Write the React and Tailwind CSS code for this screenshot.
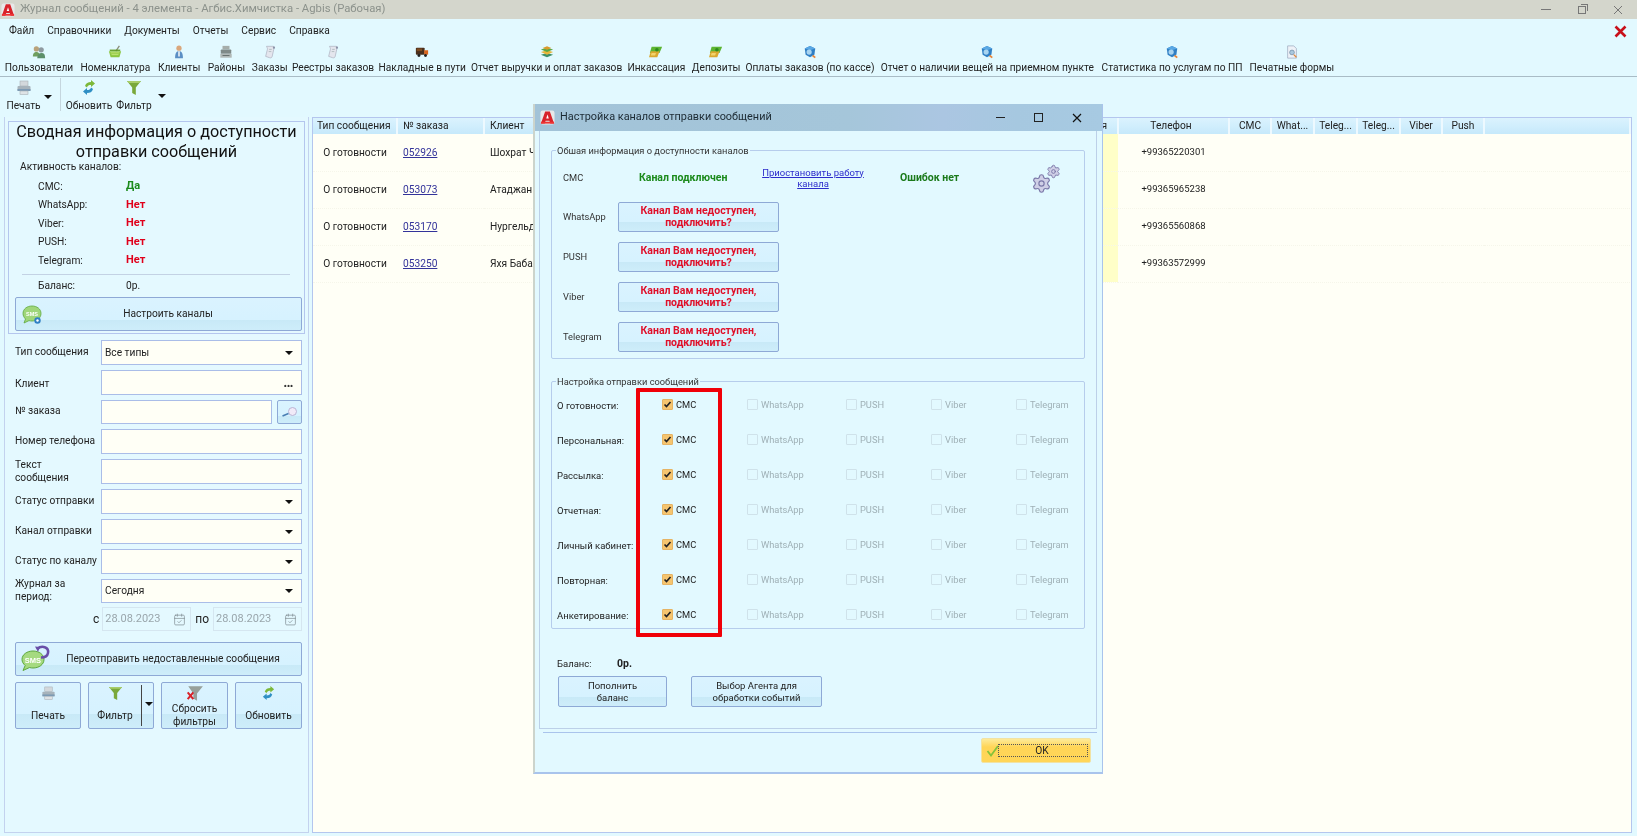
import React from "react";
import { Settings, CalendarCheck } from "lucide-react";

const btn = "bg-[linear-gradient(#daf3ff_0%,#d6f2ff_68%,#c8e9f7_68%,#ceedfa_100%)] border border-[#8ea9d6] rounded-[2px]";

const Logo = ({ s = 15 }) => (
  <svg width={s} height={s} viewBox="0 0 16 16" className="shrink-0">
    <rect x="0.5" y="0.5" width="15" height="15" rx="2.5" fill="#e8e8e8" />
    <path d="M5.5 1.5h5L15 14.5H11L10 11.5H6L5 14.5H1Z" fill="#d8232a" />
    <path d="M8 4.8L9.4 9H6.6Z" fill="#fff" />
    <path d="M1 12.5h14v2H1Z" fill="#e33" />
  </svg>
);

const Users = () => (
  <svg width="16" height="16" viewBox="0 0 16 16"><circle cx="5" cy="4.5" r="3" fill="#b9a27a" /><circle cx="10.5" cy="5.5" r="3" fill="#8f9aa0" /><path d="M1 13c0-4 2-5 4-5s4 1 4 5Z" fill="#6f9f5f" /><path d="M6 15c0-4 2-6 5-6s4 2 4 6Z" fill="#5c8f6a" /></svg>
);
const Basket = () => (
  <svg width="16" height="16" viewBox="0 0 16 16"><path d="M1 7h14l-2 7H3Z" fill="#8cc63f" /><path d="M3 9h10M4 11h8" stroke="#c9e87f" /><path d="M9 7l4-6" stroke="#8a8f7a" strokeWidth="1.5" /><path d="M2 6h12" stroke="#5f9a20" strokeWidth="1.5" /></svg>
);
const Client = () => (
  <svg width="16" height="16" viewBox="0 0 16 16"><circle cx="8" cy="3.7" r="3" fill="#d9a77c" /><path d="M3.5 15c0-6 1.500-8 4.500-8s4.500 2 4.500 8Z" fill="#5b8fc4" /><path d="M7 7h2v6H7Z" fill="#dfe9f2" /></svg>
);
const Stack = () => (
  <svg width="16" height="16" viewBox="0 0 16 16"><rect x="4" y="1" width="8" height="4" fill="#a5adaa" /><rect x="2" y="5" width="12" height="5" rx="1" fill="#7f8a88" /><rect x="1.500" y="10" width="13" height="4.500" fill="#b0b8b6" /><path d="M4 12h8" stroke="#5d6866" /></svg>
);
const Scroll = () => (
  <svg width="16" height="16" viewBox="0 0 16 16"><path d="M4 1.500h7.500c1.500 0 2 1 1 2.500l-2 9c-.3 1.500-1.500 2-3 1.500L3 13l2-8C5.300 3.500 4.500 3 4 1.500Z" fill="#e4e6ee" stroke="#a4a8b8" strokeWidth=".7" /><path d="M7 5h3M6.500 7.500h3" stroke="#9aa" strokeWidth=".7" /><circle cx="12.500" cy="3" r="1.300" fill="#8a93a8" /></svg>
);
const Truck = () => (
  <svg width="16" height="16" viewBox="0 0 16 16"><rect x="1" y="3" width="10" height="8" rx="1" fill="#4a2f1c" /><rect x="2" y="4" width="6" height="3" fill="#7c4a20" /><rect x="10.500" y="6" width="4.500" height="5" fill="#d9641c" /><circle cx="4.500" cy="12" r="1.700" fill="#222" /><circle cx="12" cy="12" r="1.700" fill="#222" /></svg>
);
const Books = () => (
  <svg width="16" height="16" viewBox="0 0 16 16"><path d="M1 11l7-2 7 2-7 3Z" fill="#3c8f6a" /><path d="M1 8l7-2 7 2-7 3Z" fill="#e8b53a" /><path d="M1 5l7-2 7 2-7 3Z" fill="#5aa845" /><path d="M3 3.500l5-2 5 2-5 2Z" fill="#d99a2b" /></svg>
);
const Money = () => (
  <svg width="16" height="16" viewBox="0 0 16 16"><path d="M3 2h12l-3 7H1Z" fill="#5cb531" /><path d="M2 7h10l-2.500 7H0Z" fill="#d9a82e" /><circle cx="9" cy="5.500" r="2" fill="#2f8a1c" /><path d="M3 9h5l-1 3H2Z" fill="#f2d36b" /></svg>
);
const Globe = () => (
  <svg width="16" height="16" viewBox="0 0 16 16"><path d="M2 4l6-3 6 3-1 7-5 3-5-3Z" fill="#2f7fc4" /><path d="M2 4l6 2 6-2-6-3Z" fill="#5aa8e4" /><circle cx="7" cy="8" r="3" fill="#a8d4f0" /><path d="M11 12l3 2.500" stroke="#e8863a" strokeWidth="2" /></svg>
);
const Doc = () => (
  <svg width="16" height="16" viewBox="0 0 16 16"><path d="M3 1h7l3 3v11H3Z" fill="#eef2f8" stroke="#9aa6bc" strokeWidth=".8" /><circle cx="8" cy="8.500" r="2.700" fill="#a9c8de" stroke="#6f8aa0" strokeWidth=".8" /><path d="M10 11l3 3" stroke="#e08a3a" strokeWidth="1.500" /></svg>
);
const Printer = ({ s = 16 }) => (
  <svg width={s} height={s} viewBox="0 0 16 16"><rect x="4" y="1" width="8" height="5" fill="#d3d8dc" stroke="#a9b1b6" strokeWidth=".6" /><rect x="1.500" y="6" width="13" height="5" rx="1" fill="#a7b3bb" /><rect x="1.500" y="9" width="13" height="2" fill="#7c9ab4" /><rect x="4" y="11" width="8" height="3.500" fill="#dfe3e6" stroke="#a9b1b6" strokeWidth=".6" /></svg>
);
const Refresh = ({ s = 16 }) => (
  <svg width={s} height={s} viewBox="0 0 16 16"><path d="M4 6c1-3 3-4 6-4V0l4 3.500L10 7V5C8 5 6.500 5.500 6 7.500Z" fill="#7cb83a" /><path d="M12 10c-1 3-3 4-6 4v2l-4-3.500L6 9v2c2 0 3.500-.5 4-2.500Z" transform="translate(0 -1)" fill="#2f8fc4" /></svg>
);
const Funnel = ({ s = 16 }) => (
  <svg width={s} height={s} viewBox="0 0 16 16"><path d="M1 1h14L9.800 7.500V15L6.200 13V7.500Z" fill="#79a83a" /><path d="M1 1h14l-1.500 2h-11Z" fill="#a8cc6a" /></svg>
);
const FunnelX = () => (
  <svg width="18" height="18" viewBox="0 0 16 16"><path d="M2 1h13L9.800 7.500V14L6.500 12V7.500Z" fill="#97a09a" /><path d="M1.500 6.500l5 6M6.500 6.500l-5 6" stroke="#d8232a" strokeWidth="1.800" /></svg>
);
const Caret = ({ className = "" }) => (
  <span className={"block w-0 h-0 border-x-[4px] border-x-transparent border-t-[4px] border-t-[#111] " + className} />
);
const SmsGear = () => (
  <svg width="20" height="20" viewBox="0 0 20 20"><path d="M10 1c5 0 9 3 9 7.500S15 16 10 16c-1 0-2-.1-3-.4L2 18l1.500-4C2 12.500 1 10.500 1 8.500 1 4 5 1 10 1Z" fill="#9fd67a" stroke="#5ea83c" strokeWidth=".8" /><text x="10" y="10.500" textAnchor="middle" fontSize="5.500" fontWeight="700" fill="#fff" fontFamily="Liberation Sans">SMS</text><circle cx="15.500" cy="15.500" r="3.200" fill="#2f7fc4" /><circle cx="15.500" cy="15.500" r="1.200" fill="#fff" /></svg>
);
const SmsResend = () => (
  <svg width="30" height="30" viewBox="0 0 30 30"><path d="M12 7c6 0 11 3.500 11 8.500S18 24 12 24c-1.200 0-2.400-.2-3.500-.5L2 26.500l2.200-5C2.200 19.800 1 17.800 1 15.500 1 10.500 6 7 12 7Z" fill="#a5da80" stroke="#5ea83c" /><text x="12" y="18.500" textAnchor="middle" fontSize="7.500" fontWeight="700" fill="#fff" fontFamily="Liberation Sans">SMS</text><path d="M16 5c5-4 12-2 11 4-.5 3-3.500 4.500-7 4.500" fill="none" stroke="#6a4fa8" strokeWidth="2.500" /><path d="M14 2.500l5 .5-2 5Z" fill="#6a4fa8" /></svg>
);
const Lens = () => (
  <svg width="18" height="14" viewBox="0 0 18 14"><circle cx="11.500" cy="6.500" r="4" fill="#f1eaf8" stroke="#b9b4d4" /><path d="M1.500 11l6-2.500" stroke="#4a7fb4" strokeWidth="1.600" /></svg>
);

const tools = [
  ["Пользователи", Users, "w-[66px]"],
  ["Номенклатура", Basket, "w-[69px]"],
  ["Клиенты", Client, "w-[41px]"],
  ["Районы", Stack, "w-[36px]"],
  ["Заказы", Scroll, "w-[33px]"],
  ["Реестры заказов", Scroll, "w-[76px]"],
  ["Накладные в пути", Truck, "w-[85px]"],
  ["Отчет выручки и оплат заказов", Books, "w-[146px]"],
  ["Инкассация", Money, "w-[56px]"],
  ["Депозиты", Money, "w-[46px]"],
  ["Оплаты заказов (по кассе)", Globe, "w-[124px]"],
  ["Отчет о наличии вещей на приемном пункте", Globe, "w-[213px]"],
  ["Статистика по услугам по ПП", Globe, "w-[139px]"],
  ["Печатные формы", Doc, "w-[83px]"],
];

const Row = ({ label, h = "h-[25px]", lc = "pb-[2px]", children }) => (
  <div className={"flex items-center " + h}>
    <div className={"w-[86px] shrink-0 text-[10.200px] leading-[13px] text-[#222] whitespace-nowrap " + lc}>{label}</div>
    {children}
  </div>
);
const Field = ({ caret, dots, text, className = "flex-1" }) => (
  <div className={"h-full border border-[#aabde8] bg-[#fffff6] flex items-center justify-between pl-[3px] pr-[8px] " + className}>
    <span className="text-[10.200px] text-[#222]">{text}</span>
    {caret && <Caret />}
    {dots && <span className="text-[12px] font-black leading-none text-[#333] tracking-[-0.5px]">...</span>}
  </div>
);
const DateBox = () => (
  <div className="w-[89px] h-full border border-[#d5e6f0] flex items-center justify-between pl-[2px] pr-[4px]">
    <span className="text-[11px] text-[#9aa6ac]">28.08.2023</span>
    <CalendarCheck size={13} color="#7f8c92" strokeWidth={1.3} />
  </div>
);
const Channel = ({ name, value, ok }) => (
  <div className="flex items-center h-[18.500px] pl-[23px]">
    <span className="w-[88px] text-[10.200px] text-[#222]">{name}</span>
    <span className={"text-[11px] font-bold " + (ok ? "text-[#1b8a1b]" : "text-[#e0001b]")}>{value}</span>
  </div>
);
const ConnectRow = ({ name }) => (
  <div className="flex items-center h-[30px]">
    <span className="w-[55px] text-[9.300px] text-[#333]">{name}</span>
    <div className={btn + " w-[161px] h-full flex items-center justify-center text-center text-[10.500px] leading-[12px] font-bold text-[#e0102a]"}>
      Канал Вам недоступен,<br />подключить?
    </div>
  </div>
);
const Check = ({ checked, label, className }) => (
  <div className={"flex items-center gap-[3px] " + className}>
    {checked ? (
      <span className="w-[11px] h-[11px] rounded-[1px] bg-[#f6c56f] border border-[#e6b464] flex items-center justify-center">
        <svg width="9" height="9" viewBox="0 0 9 9"><path d="M1.500 4.500l2 2 4-4.500" fill="none" stroke="#222" strokeWidth="1.700" /></svg>
      </span>
    ) : (
      <span className="w-[11px] h-[11px] rounded-[1px] border border-[#cfe2ea]" />
    )}
    <span className={"text-[9.300px] " + (checked ? "text-[#222]" : "text-[#9fb0b6]")}>{label}</span>
  </div>
);
const SendRow = ({ label }) => (
  <div className="flex items-center h-[35px]">
    <span className="w-[105px] text-[9.500px] text-[#222] mt-[3px]">{label}</span>
    <Check checked label="СМС" className="w-[85px]" />
    <Check label="WhatsApp" className="w-[99px]" />
    <Check label="PUSH" className="w-[85px]" />
    <Check label="Viber" className="w-[85px]" />
    <Check label="Telegram" className="w-[60px]" />
  </div>
);
const Legend = ({ children }) => (
  <span className="absolute left-[4px] -top-[7px] bg-[#e2f9ff] px-[1px] text-[9.300px] leading-[13px] text-[#333]">{children}</span>
);

const heads = [
  ["Тип сообщения", "w-[84px] text-left pl-[4px]"],
  ["№ заказа", "w-[87px] text-left pl-[5px]"],
  ["Клиент", "w-[466px] text-left pl-[5px]"],
  ["", "w-[100px]"],
  ["Время", "w-[68px] text-right pr-[10px]"],
  ["Телефон", "w-[111px] text-center pr-[5px]"],
  ["СМС", "w-[42px] text-center"],
  ["What...", "w-[43px] text-center"],
  ["Teleg...", "w-[43px] text-center"],
  ["Teleg...", "w-[43px] text-center"],
  ["Viber", "w-[42px] text-center"],
  ["Push", "w-[42px] text-center"],
  ["", ""],
];
const rows = [
  ["052926", "Шохрат Ч", "+99365220301"],
  ["053073", "Атаджан", "+99365965238"],
  ["053170", "Нургельд", "+99365560868"],
  ["053250", "Яхя Бабаг", "+99363572999"],
];

export default function App() {
  return (
    <div className="relative w-[1637px] h-[836px] overflow-hidden bg-[#e2f9ff] font-['Roboto',sans-serif] text-[#222] blur-[0.35px]">
      {/* window title */}
      <div className="h-[19px] bg-[#d4d6cc] flex items-center pl-[1px] pr-[14px]">
        <Logo s={14} />
        <span className="ml-[5px] text-[11.300px] text-[#8c928c]">Журнал сообщений - 4 элемента - Агбис.Химчистка - Agbis (Рабочая)</span>
        <div className="ml-auto flex items-center gap-[27px] text-[#6a6a6a]">
          <span className="w-[10px] h-px bg-[#777]" />
          <span className="relative w-[8px] h-[8px] border border-[#777] mt-[1px]"><span className="absolute -top-[3px] -right-[3px] w-[7px] h-[7px] border-t border-r border-[#777]" /></span>
          <svg width="10" height="10" viewBox="0 0 10 10"><path d="M1 1l8 8M9 1l-8 8" stroke="#777" /></svg>
        </div>
      </div>

      {/* menu */}
      <div className="h-[23px] flex items-center pl-[9px] pr-[10px] pt-[1px] gap-[13px] text-[10.200px]">
        {["Файл", "Справочники", "Документы", "Отчеты", "Сервис", "Справка"].map((m) => <span key={m}>{m}</span>)}
        <svg className="ml-auto" width="13" height="13" viewBox="0 0 13 13"><path d="M1.500 1.500l10 10M11.500 1.500l-10 10" stroke="#c8101a" strokeWidth="2.600" /></svg>
      </div>

      {/* main toolbar */}
      <div className="h-[35px] border-b border-[#a9bcc6] flex gap-[8.800px] pl-[6px]">
        {tools.map(([label, Icon, w]) => (
          <div key={label} className={"flex flex-col items-center shrink-0 " + w}>
            <div className="h-[19px] flex items-center justify-center [&_svg]:w-[14px] [&_svg]:h-[14px]"><Icon /></div>
            <span className="text-[10.200px] leading-[14px] whitespace-nowrap">{label}</span>
          </div>
        ))}
      </div>

      {/* secondary toolbar */}
      <div className="h-[40px] flex items-start pl-[7px] pt-[1px]">
        <div className="flex flex-col items-center w-[33px]">
          <div className="h-[20px] flex items-center"><Printer /></div>
          <span className="text-[10.200px] leading-[14px] mt-[1px]">Печать</span>
        </div>
        <Caret className="ml-[4px] mt-[17px]" />
        <div className="ml-[8px] mr-[5px] w-px h-[33px] bg-[#c5d6de]" />
        <div className="flex flex-col items-center w-[46px]">
          <div className="h-[20px] flex items-center"><Refresh /></div>
          <span className="text-[10.200px] leading-[14px] mt-[1px]">Обновить</span>
        </div>
        <div className="flex flex-col items-center w-[36px] ml-[4px]">
          <div className="h-[20px] flex items-center"><Funnel /></div>
          <span className="text-[10.200px] leading-[14px] mt-[1px]">Фильтр</span>
        </div>
        <Caret className="ml-[6px] mt-[16px]" />
      </div>

      {/* content */}
      <div className="flex h-[716px] pl-[4px]">
        {/* left panel */}
        <div className="w-[305px] shrink-0 border border-[#c3d2ee] border-t-0 px-[3px] pt-[4px] bg-[#e4f9ff]">
          <div className="h-[213px] border border-[#b4c6ee] pl-[6px] pr-[2px]">
            <div className="-ml-[6px] -mr-[2px] text-center text-[16.200px] leading-[20px] text-[#111] whitespace-nowrap">Сводная информация о доступности<br />отправки сообщений</div>
            <div className="text-[10.200px] leading-[14px] mt-[-2px] pl-[5px]">Активность каналов:</div>
            <div className="mt-[3px]">
              <Channel name="СМС:" value="Да" ok />
              <Channel name="WhatsApp:" value="Нет" />
              <Channel name="Viber:" value="Нет" />
              <Channel name="PUSH:" value="Нет" />
              <Channel name="Telegram:" value="Нет" />
            </div>
            <div className="h-px bg-[#c3d2e4] mt-[4px] ml-[7px] mr-[12px]" />
            <div className="flex items-center h-[14px] mt-[4px] pl-[23px]">
              <span className="w-[88px] text-[10.200px]">Баланс:</span>
              <span className="text-[10.200px]">0р.</span>
            </div>
            <div className={btn + " relative h-[34px] mt-[4px] flex items-center justify-center text-[10.200px] pl-[19px]"}>
              <span className="absolute left-[6px] top-[7px]"><SmsGear /></span>
              Настроить каналы
            </div>
          </div>

          <div className="flex flex-col gap-[5px] mt-[6px] pl-[7px] pr-[3px]">
            <Row label="Тип сообщения"><Field caret text="Все типы" /></Row>
            <Row label="Клиент" lc="pt-[2px]"><Field dots /></Row>
            <Row label="№ заказа" h="h-[24px]" lc="pb-[4px]">
              <Field />
              <div className={btn + " w-[25px] h-full ml-[5px] flex items-center justify-center"}><Lens /></div>
            </Row>
            <Row label="Номер телефона"><Field /></Row>
            <Row label={<>Текст<br />сообщения</>}><Field /></Row>
            <Row label="Статус отправки"><Field caret /></Row>
            <Row label="Канал отправки"><Field caret /></Row>
            <Row label="Статус по каналу"><Field caret /></Row>
            <Row label={<>Журнал за<br />период:</>} h="h-[24px]"><Field caret text="Сегодня" /></Row>
            <div className="flex items-center justify-end h-[24px] -mt-[1px] text-[12px]">
              <span className="mr-[3px]">с</span>
              <DateBox />
              <span className="mx-[4px]">по</span>
              <DateBox />
            </div>
          </div>

          <div className="pl-[7px] pr-[3px] mt-[11px]">
            <div className={btn + " relative h-[34px] flex items-center justify-center text-[10.200px] pl-[29px]"}>
              <span className="absolute left-[5px] top-[1px]"><SmsResend /></span>
              Переотправить недоставленные сообщения
            </div>
            <div className="flex justify-between mt-[6px] h-[47px] text-[10.200px]">
              <div className={btn + " w-[66px] flex flex-col items-center pt-[3px]"}>
                <Printer s={15} />
                <span className="mt-[7px]">Печать</span>
              </div>
              <div className={btn + " w-[66px] flex"}>
                <div className="w-[52px] flex flex-col items-center pt-[3px]">
                  <Funnel s={15} />
                  <span className="mt-[7px]">Фильтр</span>
                </div>
                <div className="w-[1px] h-[41px] mt-[2px] bg-[#444]" />
                <Caret className="ml-[3px] mt-[19px] border-x-[3px] border-t-[3px]" />
              </div>
              <div className={btn + " w-[67px] flex flex-col items-center pt-[2px] leading-[13px] text-center"}>
                <FunnelX />
                <span className="mt-[-1px]">Сбросить<br />фильтры</span>
              </div>
              <div className={btn + " w-[67px] flex flex-col items-center pt-[3px]"}>
                <Refresh s={15} />
                <span className="mt-[7px]">Обновить</span>
              </div>
            </div>
          </div>
        </div>

        {/* table */}
        <div className="ml-[3px] w-[1320px] shrink-0 border border-[#b4c6ee] bg-[#fffff6]">
          <table className="w-full table-fixed border-collapse text-[10.200px]">
            <thead>
              <tr className="h-[16px] bg-[linear-gradient(#dbf3fe,#c6e9fb)]">
                {heads.map(([t, c], i) => (
                  <th key={i} className={"font-normal p-0 border-r-2 border-[#edf9ff] whitespace-nowrap leading-[16px] " + c}>{t}</th>
                ))}
              </tr>
            </thead>
            <tbody>
              {rows.map(([order, client, phone]) => (
                <tr key={order} className="h-[37px] border-b border-dotted border-[#f6f6ea]">
                  <td className="text-center p-0">О готовности</td>
                  <td className="pl-[6px] p-0"><span className="text-[#33339a] underline">{order}</span></td>
                  <td className="pl-[6px] p-0 whitespace-nowrap">{client}</td>
                  <td className="p-0" />
                  <td className="p-0 bg-[#ffffc8]" />
                  <td className="text-center p-0 text-[9.500px]">{phone}</td>
                  <td className="p-0" colSpan={7} />
                </tr>
              ))}
            </tbody>
          </table>
        </div>
      </div>

      {/* dialog */}
      <div className="absolute left-[533px] top-[104px] w-[570px] h-[670px] flex flex-col bg-[#e2f9ff] border-l-2 border-l-[#ccd4cc] border-r border-r-[#a9c4ec] border-b-2 border-b-[#a9c4ec]">
        <div className="h-[27px] shrink-0 flex items-center pl-[5px] bg-[linear-gradient(90deg,#a2c3d8_0%,#a5c6da_55%,#abc6e2_72%,#a6c8e0_85%,#a7cae2_100%)]">
          <Logo s={15} />
          <span className="ml-[5px] text-[10.900px] text-[#1c2a33]">Настройка каналов отправки сообщений</span>
          <div className="ml-auto flex items-center pr-[20px] gap-[29px]">
            <span className="w-[9px] h-px bg-[#222]" />
            <span className="w-[9px] h-[9px] border border-[#222]" />
            <svg width="10" height="10" viewBox="0 0 10 10"><path d="M1 1l8 8M9 1l-8 8" stroke="#111" strokeWidth="1.200" /></svg>
          </div>
        </div>

        <div className="ml-[4px] w-[558px] h-[598px] shrink-0 border-l border-b border-r border-[#bcd0e8] px-[11px] pt-[19px]">
          <div className="relative h-[209px] w-[534px] border border-[#b6cdec] rounded-[2px] px-[11px] pt-[10px]">
            <Legend>Обшая информация о доступности каналов</Legend>
            <div className="flex items-center h-[34px]">
              <span className="w-[76px] text-[9.300px] text-[#333]">СМС</span>
              <span className="w-[115px] text-[10.500px] font-bold text-[#1b8a1b] whitespace-nowrap">Канал подключен</span>
              <span className="w-[118px] text-center text-[9.500px] leading-[11.500px] text-[#2c2ccc] underline">Приостановить работу<br />канала</span>
              <span className="w-[28px]" />
              <span className="w-[133px] text-[10.500px] font-bold text-[#1b7a1b]">Ошибок нет</span>
              <span className="relative w-[27px] h-[27px] block">
                <Settings size={21} color="#7a78a8" fill="#cfcfe6" strokeWidth={1.300} className="absolute left-[-2px] bottom-[-2px]" />
                <Settings size={15} color="#7a78a8" fill="#cfcfe6" strokeWidth={1.500} className="absolute right-[-1px] top-[-1px]" />
              </span>
            </div>
            <div className="flex flex-col gap-[10px] mt-[7px]">
              <ConnectRow name="WhatsApp" />
              <ConnectRow name="PUSH" />
              <ConnectRow name="Viber" />
              <ConnectRow name="Telegram" />
            </div>
          </div>

          <div className="relative h-[248px] w-[534px] mt-[22px] border border-[#b6cdec] rounded-[2px] px-[5px] pt-[5px]">
            <Legend>Настройка отправки сообщений</Legend>
            {["О готовности:", "Персональная:", "Рассылка:", "Отчетная:", "Личный кабинет:", "Повторная:", "Анкетирование:"].map((l) => <SendRow key={l} label={l} />)}
            <div className="absolute left-[84px] top-[6px] w-[86px] h-[249px] border-[4px] border-[#f00008] rounded-[1px]" />
          </div>

          <div className="flex items-center h-[14px] mt-[28px] pl-[6px] text-[9.500px]">
            <span className="w-[60px]">Баланс:</span>
            <span className="font-bold text-[10.500px]">0р.</span>
          </div>
          <div className="flex mt-[5px] pl-[7px] gap-[24px]">
            <div className={btn + " w-[109px] h-[31px] flex items-center justify-center text-center text-[9.500px] leading-[12px]"}>Пополнить<br />баланс</div>
            <div className={btn + " w-[131px] h-[31px] flex items-center justify-center text-center text-[9.500px] leading-[12px]"}>Выбор Агента для<br />обработки событий</div>
          </div>
        </div>

        <div className="ml-[8px] w-[554px] h-px mt-[3px] bg-[#a9c4ec]" />

        <div className="flex justify-end pr-[11px] mt-[5px]">
          <div className="relative w-[110px] h-[25px] rounded-[2px] border border-[#f1e3a4] bg-[linear-gradient(#fdeb9a_0%,#ffd557_35%,#ffd658_100%)] flex items-center justify-center pl-[12px] text-[10.200px]">
            <svg className="absolute left-[4px] top-[5px]" width="13" height="13" viewBox="0 0 13 13"><path d="M1.500 7l3.500 4.500L12 2" fill="none" stroke="#86c23a" strokeWidth="1.800" /></svg>
            <span className="absolute left-[16px] top-[5px] right-[2px] bottom-[5px] border border-dotted border-[#555]" />
            OK
          </div>
        </div>
      </div>
    </div>
  );
}
